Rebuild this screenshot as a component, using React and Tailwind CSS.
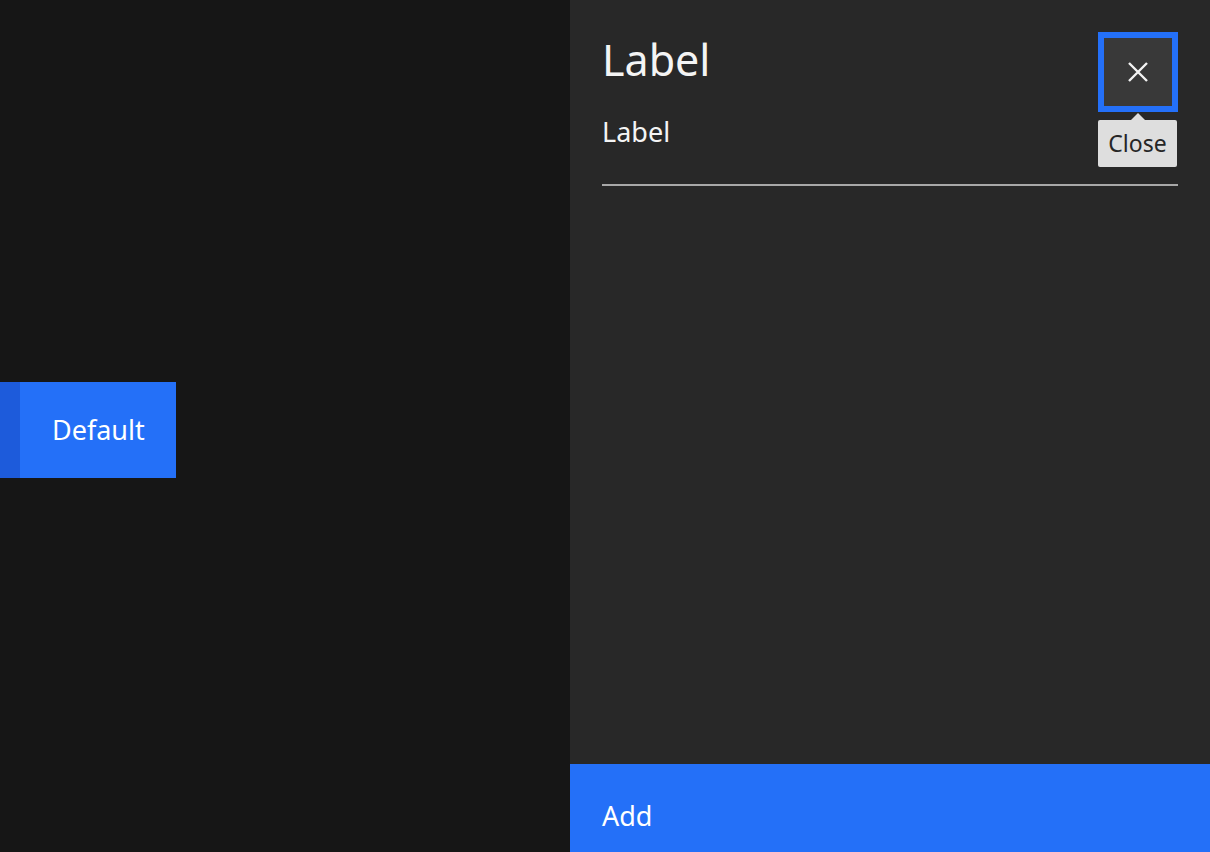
import React from 'react';

const CloseIcon = () => (
  <svg width="20" height="20" viewBox="0 0 20 20" fill="none">
    <path d="M1 1 L19 19 M19 1 L1 19" stroke="#f4f4f4" strokeWidth="2.4" />
  </svg>
);

const App = () => {
  return (
    <div className="flex h-[852px] w-full font-['Noto_Sans',sans-serif] text-[#f4f4f4]">
      <div className="w-[570px] bg-[#161616] pt-[382px]">
        <button className="flex h-[96px] w-[176px] bg-[#2470f8]">
          <span className="h-full w-[20px] bg-[#1d5bdb]"></span>
          <span className="pl-[32px] pt-[30px] text-[27px] leading-[36px] text-white">Default</span>
        </button>
      </div>

      <div className="flex flex-1 flex-col bg-[#282828]">
        <div className="px-[32px] pt-[32px]">
          <div className="flex h-[80px] items-start justify-between">
            <h2 className="mt-[0px] text-[43px] font-normal leading-[56px] text-[#f4f4f4]">Label</h2>
            <div className="relative">
              <button className="flex h-[80px] w-[80px] items-center justify-center border-[6px] border-[#2470f8] bg-[#393939]">
                <CloseIcon />
              </button>
              <div className="absolute left-0 top-[88px] flex h-[47px] w-[79px] items-center justify-center rounded-[2px] bg-[#dedede] text-[23px] text-[#262626]">
                <span className="absolute left-1/2 top-[-7px] h-0 w-0 -translate-x-1/2 border-x-[7px] border-b-[7px] border-x-transparent border-b-[#dedede]"></span>
                Close
              </div>
            </div>
          </div>
          <label className="mt-[2px] block text-[27px] leading-[36px] text-[#f4f4f4]">Label</label>
          <div className="mt-[34px] h-[2px] w-full bg-[#a8a8a8]"></div>
        </div>

        <button className="mt-auto flex h-[88px] w-full items-center bg-[#2470f8] px-[32px] pt-[16px] text-left text-[27px] text-white">
          Add
        </button>
      </div>
    </div>
  );
};

export default App;
